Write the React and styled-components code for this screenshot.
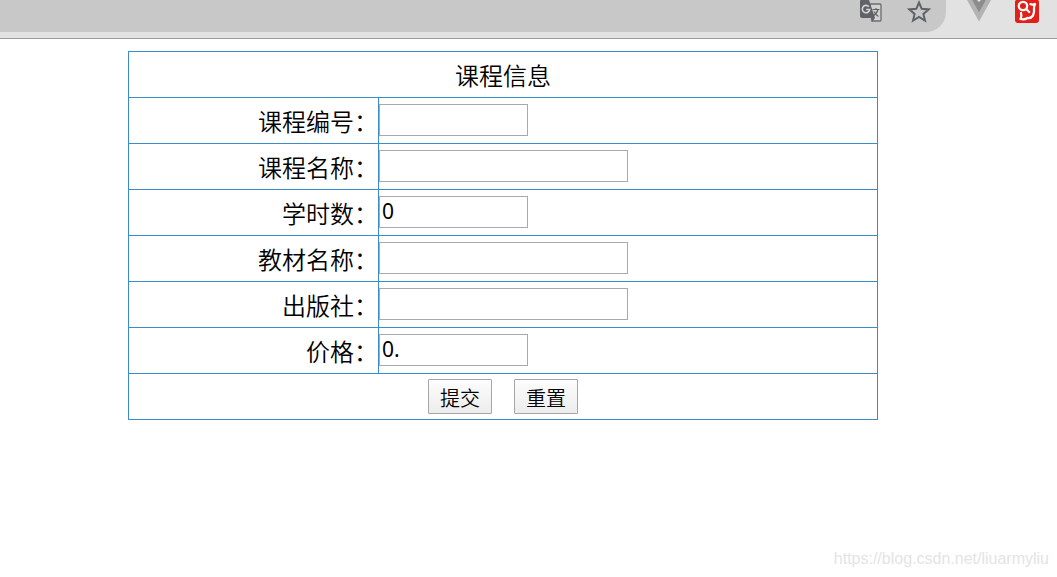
import React from "react";
import styled, { createGlobalStyle } from "styled-components";

const GlobalStyle = createGlobalStyle`
  * { box-sizing: border-box; }
  body {
    margin: 0;
    background: #fff;
    color: #000;
    font-family: "Open Sans", "Noto Sans CJK SC", sans-serif;
    font-weight: 350;
  }
`;

const Page = styled.div`
  display: flex;
  flex-direction: column;
  min-height: 100vh;
`;

const Toolbar = styled.header`
  display: flex;
  align-items: flex-start;
  height: 39px;
  padding-right: 18px;
  background: #e2e2e2;
  border-bottom: 1px solid #9b9b9b;
`;

const AddressBar = styled.div`
  display: flex;
  flex: 1;
  justify-content: flex-end;
  gap: 24px;
  height: 32px;
  padding-right: 15px;
  background: #c8c8c8;
  border-bottom-right-radius: 20px;
`;

const Extensions = styled.div`
  display: flex;
  gap: 24px;
  padding-left: 21px;
`;

const Icon = styled.svg`
  display: block;
  width: 24px;
  height: 24px;
`;

const Content = styled.main`
  padding: 12px 128px;
`;

const CourseTable = styled.table`
  width: 750px;
  border-collapse: collapse;
  table-layout: fixed;
  font-size: 24px;
  line-height: 36px;
`;

const Row = styled.tr`
  height: 46px;
`;

const cell = `
  border: 1px solid #3b8cca;
  font-weight: inherit;
`;

const Title = styled.th`
  ${cell}
  padding: 2px 0 0;
  text-align: center;
`;

const LabelCell = styled.th`
  ${cell}
  width: 250px;
  padding: 2px 0 0;
  text-align: right;
`;

const FieldCell = styled.td`
  ${cell}
  padding: 0;
`;

const InputCell = styled(FieldCell)`
  padding-bottom: 2px;
`;

const Field = styled.input`
  display: block;
  width: ${(p) => (p.$wide ? 249 : 149)}px;
  height: 32px;
  padding: 0 2px 2px;
  border: 1px solid #a9a9a9;
  border-radius: 0;
  background: #fff;
  color: #000;
  font-family: "Noto Sans", "Noto Sans CJK SC", sans-serif;
  font-size: 21px;
  font-weight: 400;
  outline: none;
`;

const Actions = styled.div`
  display: flex;
  justify-content: center;
  gap: 22px;
`;

const Button = styled.button`
  width: 64px;
  height: 35px;
  padding: 4px 0 0;
  border: 1px solid #a6a6a6;
  border-radius: 1px;
  background: linear-gradient(#fdfdfd, #ececec);
  color: #000;
  font-family: inherit;
  font-size: 20px;
  font-weight: inherit;
  line-height: 30px;
`;

const Watermark = styled.footer`
  margin-top: auto;
  padding: 0 8px 8px;
  text-align: right;
  color: #e4e4e4;
  font-family: "Liberation Sans", sans-serif;
  font-size: 16px;
  line-height: 20px;
`;

const fields = [
  { id: "number", label: "课程编号：" },
  { id: "name", label: "课程名称：", wide: true },
  { id: "hours", label: "学时数：", value: "0" },
  { id: "book", label: "教材名称：", wide: true },
  { id: "press", label: "出版社：", wide: true },
  { id: "price", label: "价格：", value: "0." },
];

function TranslateIcon() {
  return (
    <Icon viewBox="0 0 24 24" aria-hidden="true">
      <path d="M11 4h10q1 0 1 1v15q0 1-1 1h-8z" fill="#d2d2d2" stroke="#696c6f" strokeWidth="1.3" />
      <path d="M2 0h8l6 18H3q-2 0-2-2V1q0-1 1-1z" fill="#5f6368" />
      <path d="M12 18h4l-3 4z" fill="#5f6368" />
      <path d="M9.800 6.600A3.700 3.700 0 1 0 10.700 9.500H7.200" fill="none" stroke="#d4d4d4" strokeWidth="1.6" />
      <path d="M13.500 9.500h7M17 8v1.500M19 9.500q-1 4-5 6.500M15 11.500q1.500 3 4.500 5" fill="none" stroke="#5f6368" strokeWidth="1.2" />
    </Icon>
  );
}

function StarIcon() {
  return (
    <Icon viewBox="0 0 24 24" aria-hidden="true">
      <path
        d="M12 2.500l2.700 6.300 6.900.6-5.200 4.500 1.600 6.700-6-3.600-6 3.600 1.600-6.700-5.200-4.500 6.900-.6z"
        fill="none"
        stroke="#5f6368"
        strokeWidth="2"
      />
    </Icon>
  );
}

function VueIcon() {
  return (
    <Icon viewBox="0 0 24 24" aria-hidden="true">
      <path d="M0 0h5l7 12 7-12h5L12 21.500z" fill="#b3b3b3" />
      <path d="M5 0h5l2 2 2-2h5l-7 12.500z" fill="#8c8c8c" />
    </Icon>
  );
}

function SearchIcon() {
  return (
    <Icon viewBox="0 0 24 24" aria-hidden="true">
      <path d="M1 0h22q1 .5 1 1.500V20q0 3-3 3H3q-3 0-3-3V1.500Q0 .5 1 0z" fill="#e2201a" />
      <g fill="none" stroke="#fff" strokeWidth="2.3" strokeLinecap="round" strokeLinejoin="round">
        <circle cx="8" cy="6" r="4.200" />
        <path d="M11.200 9l3 3M15.500 4.200q2.500.8 4.500-.2-1.200 2.500-1 5 .500 3-1 6.500-2 3-5.500 2.500-3 2-7 1 1.500-3 .500-6" />
      </g>
    </Icon>
  );
}

export default function App() {
  return (
    <Page>
      <GlobalStyle />
      <Toolbar>
        <AddressBar>
          <TranslateIcon />
          <StarIcon />
        </AddressBar>
        <Extensions>
          <VueIcon />
          <SearchIcon />
        </Extensions>
      </Toolbar>
      <Content>
        <form onSubmit={(e) => e.preventDefault()}>
          <CourseTable>
            <colgroup>
              <col width="250" />
              <col />
            </colgroup>
            <tbody>
              <Row>
                <Title colSpan={2}>课程信息</Title>
              </Row>
              {fields.map((f) => (
                <Row key={f.id}>
                  <LabelCell scope="row">
                    <label htmlFor={f.id}>{f.label}</label>
                  </LabelCell>
                  <InputCell>
                    <Field id={f.id} name={f.id} type="text" defaultValue={f.value} $wide={f.wide} />
                  </InputCell>
                </Row>
              ))}
              <Row>
                <FieldCell colSpan={2}>
                  <Actions>
                    <Button type="submit">提交</Button>
                    <Button type="reset">重置</Button>
                  </Actions>
                </FieldCell>
              </Row>
            </tbody>
          </CourseTable>
        </form>
      </Content>
      <Watermark>https://blog.csdn.net/liuarmyliu</Watermark>
    </Page>
  );
}
